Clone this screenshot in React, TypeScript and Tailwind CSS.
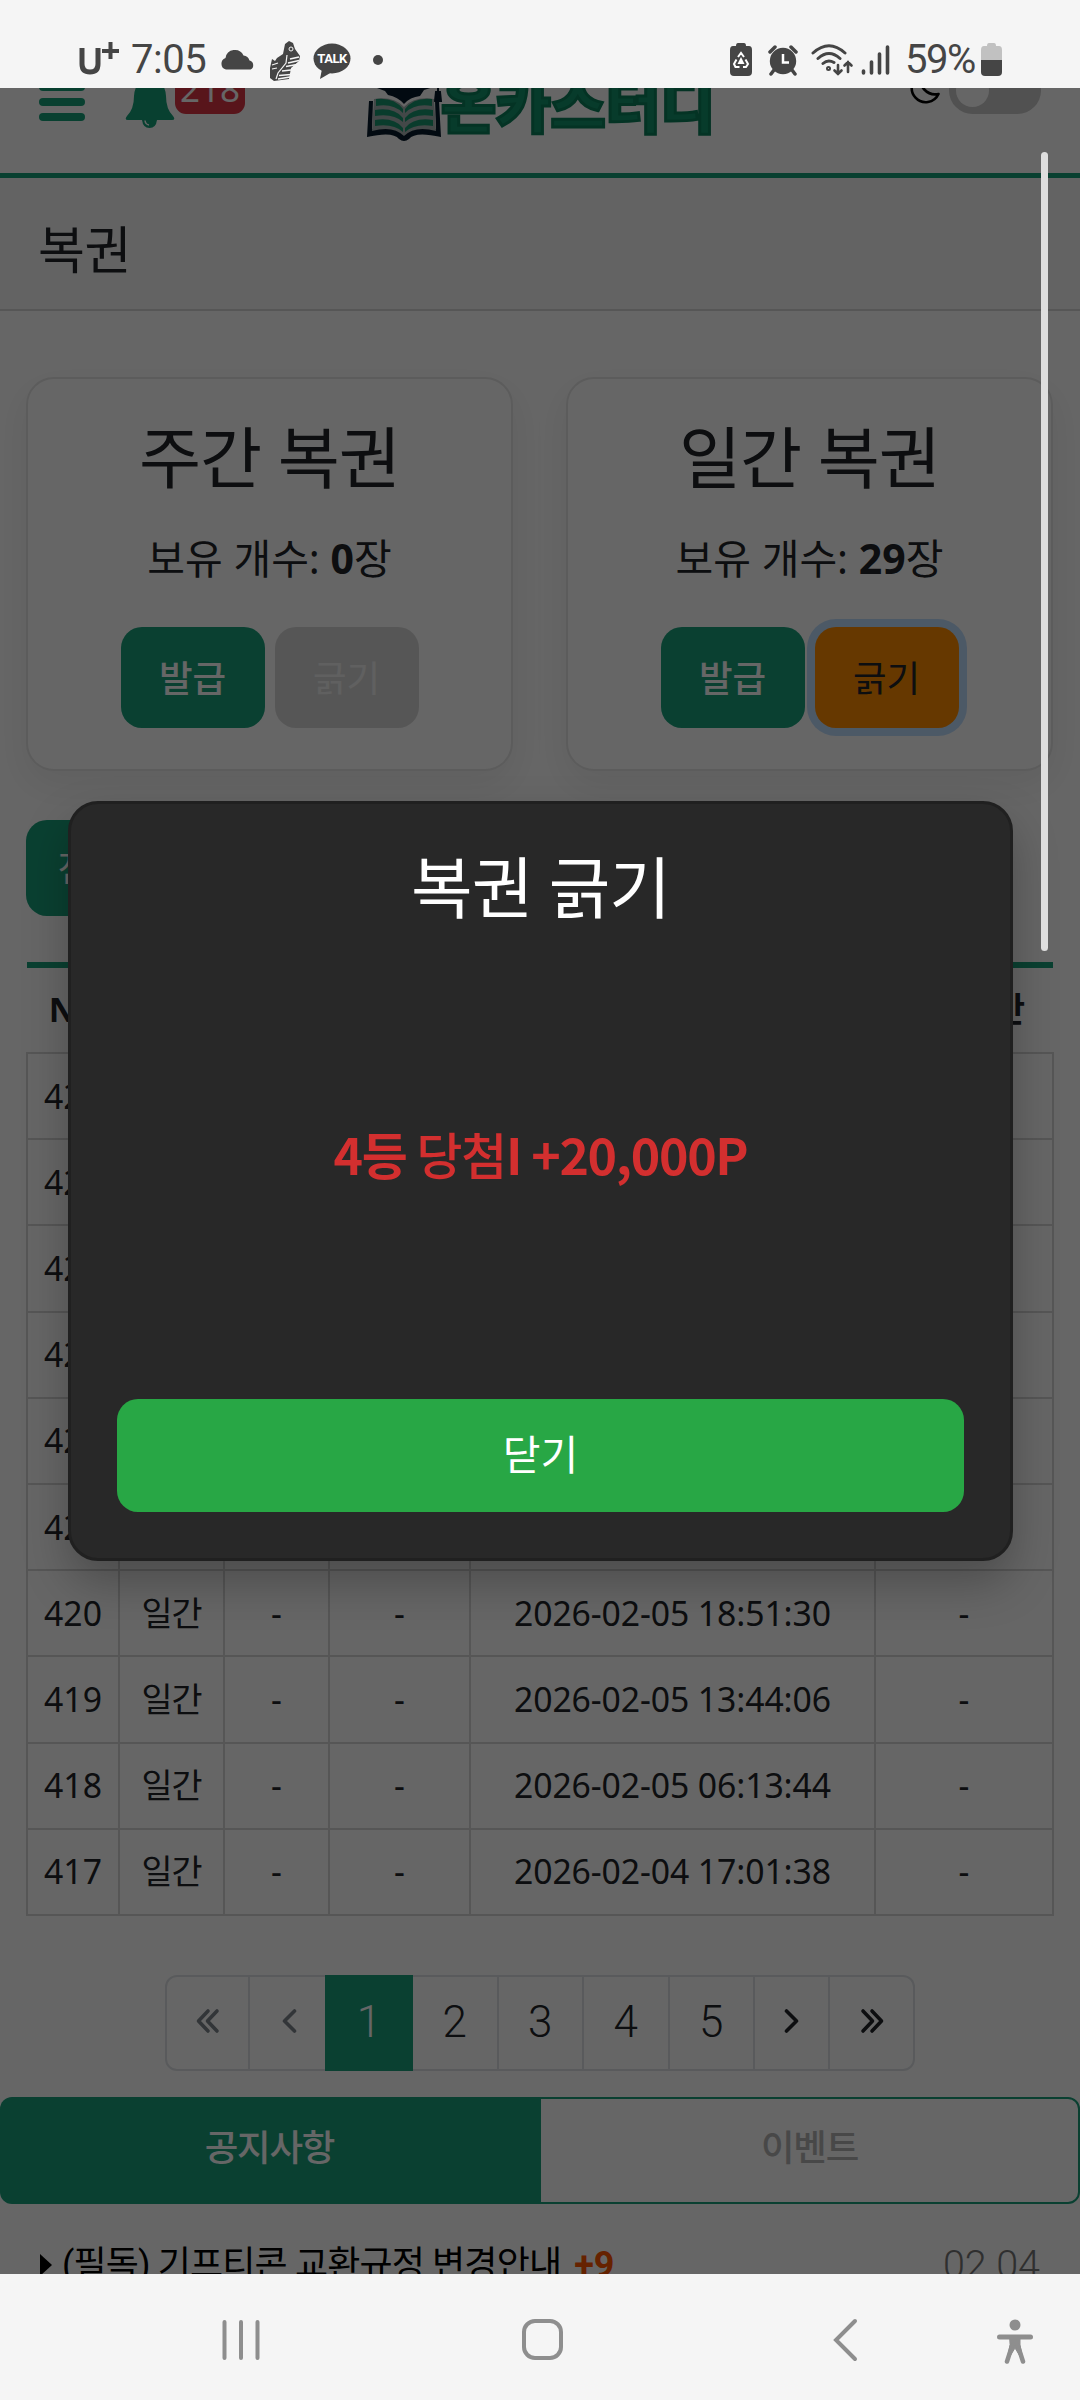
import React from 'react';

const SANS = "font-['Noto_Sans','Noto_Sans_CJK_KR',sans-serif]";
const ROBOTO = "font-['Roboto','Noto_Sans_CJK_KR',sans-serif]";

const rows = [
  { no: 426, date: '2026-02-07 18:32:11' },
  { no: 425, date: '2026-02-07 13:05:48' },
  { no: 424, date: '2026-02-07 06:21:09' },
  { no: 423, date: '2026-02-06 19:14:52' },
  { no: 422, date: '2026-02-06 13:11:37' },
  { no: 421, date: '2026-02-06 06:40:25' },
  { no: 420, date: '2026-02-05 18:51:30' },
  { no: 419, date: '2026-02-05 13:44:06' },
  { no: 418, date: '2026-02-05 06:13:44' },
  { no: 417, date: '2026-02-04 17:01:38' },
];

const ShoeIcon = () => (
  <svg width="32" height="40" viewBox="0 0 32 40">
    <path d="M16 3 L20 0 L24 2 L26 8 L31 15 L30 20 L22 27 L20 38 L5 40 L1 37 L1 27 L3 18 L6 20 L8 17 L14 13Z" fill="#454545" />
    <path d="M18 14 L17 22 L9 32 L7 38 M3 24 l6 -2 M3 28 l5 -1" stroke="#f5f5f5" strokeWidth="1.2" fill="none" />
    <path d="M21 18 l9 -2 M19 22 l11 -2.500 M17 25.500 l11 -2 M13 30 l9 -1 M10 34.500 l12 -1 M9 38 l12 -2" stroke="#f5f5f5" strokeWidth="1.700" />
    <circle cx="22" cy="8" r="2" fill="none" stroke="#f5f5f5" strokeWidth="1" />
  </svg>
);

const StatusBar = () => (
  <div className={`flex h-[88px] shrink-0 items-start bg-[#f5f5f5] pl-[79px] pr-[78px] text-[#454545] ${ROBOTO}`}>
    <svg width="41" height="34" viewBox="0 0 41 34" className="mt-[42px]" fill="none" stroke="#454545">
      <path d="M3 6 V22 Q3 30 11 30 Q19 30 19 22 V6" strokeWidth="5" />
      <path d="M23 9 H40 M31.5 0 V17" strokeWidth="4" />
    </svg>
    <span className="ml-[11px] mt-[37px] w-[76px] text-[40px] leading-[46px] tracking-[-0.5px]">7:05</span>
    <svg width="36" height="21" viewBox="0 0 36 21" className="ml-[13px] mt-[49px]" fill="#454545">
      <path d="M6 20.500 A6 6 0 0 1 5.500 9 A9.500 9.500 0 0 1 23.500 6.500 A7 7 0 0 1 29.500 11.500 A4.800 4.800 0 0 1 30.500 20.500Z" />
    </svg>
    <div className="ml-[13px] mt-[41px]"><ShoeIcon /></div>
    <div className="relative ml-[12px] mt-[43px] h-[36px] w-[38px]">
      <svg width="38" height="36" viewBox="0 0 38 36" fill="#454545">
        <ellipse cx="19" cy="15.500" rx="18.500" ry="15" />
        <path d="M9 26 L7 36 L19 29Z" />
      </svg>
      <span className="absolute left-0 top-[8px] w-full text-center text-[13px] font-bold leading-[16px] tracking-[-0.5px] text-white">TALK</span>
    </div>
    <span className="ml-[22px] mt-[55px] size-[10px] rounded-full bg-[#454545]" />

    <div className="ml-auto flex items-start">
      <svg width="22" height="33" viewBox="0 0 22 33" className="mt-[43px]">
        <path d="M6 3 Q6 0 8 0 H14 Q16 0 16 3 H19 Q22 3 22 7 V29 Q22 33 18 33 H4 Q0 33 0 29 V7 Q0 3 3 3Z" fill="#454545" />
        <path d="M8 14 L11 10 L14 14 M15.500 16.500 L18 21 L16 24 H13 M9.500 24 H5.500 L4 21 L6.500 16.500" stroke="#fff" strokeWidth="2" fill="none" />
        <path d="M11 14 L14.500 21 H7.500Z" fill="#fff" />
      </svg>
      <svg width="30" height="31" viewBox="0 0 30 31" className="ml-[16px] mt-[45px]" fill="none" stroke="#454545">
        <circle cx="15" cy="16" r="13.200" fill="#454545" stroke="none" />
        <path d="M2 7 L7 2 M28 7 L23 2 M6 25 L3 29 M24 25 L27 29" strokeWidth="3.500" strokeLinecap="round" />
        <path d="M15 9 V17.500 H21" stroke="#fff" strokeWidth="2.500" />
      </svg>
      <svg width="43" height="32" viewBox="0 0 43 32" className="ml-[13px] mt-[44px]" fill="none" stroke="#454545" strokeWidth="3" strokeLinecap="round">
        <path d="M2 9 Q18 -5.500 34 9 M7 14.500 Q18 4.500 29 14.500 M12 19.500 Q17 15 23 18.500" />
        <circle cx="17.500" cy="24.500" r="1" />
        <path d="M27 21 V30 M23.500 26.500 L27 30 L30.500 26.500 M37 28 V18 M33.500 21.500 L37 18 L40.500 21.500" strokeWidth="2.600" />
      </svg>
      <svg width="30" height="31" viewBox="0 0 30 31" className="ml-[7px] mt-[45px]" stroke="#454545" strokeWidth="3.600" strokeLinecap="round">
        <path d="M2.500 26 V28 M10.500 17 V28 M18.500 9 V28 M26.500 2 V28" />
      </svg>
      <span className="ml-[14px] mt-[37px] w-[70px] text-[40px] leading-[46px] tracking-[-1.500px]">59%</span>
      <svg width="21" height="33" viewBox="0 0 21 33" className="ml-[6px] mt-[43px]">
        <path d="M6 3 Q6 0 8 0 H13 Q15 0 15 3 H18 Q21 3 21 7 V17 H0 V7 Q0 3 3 3Z" fill="#c1c1c1" />
        <path d="M0 17 H21 V29 Q21 33 17 33 H4 Q0 33 0 29Z" fill="#454545" />
      </svg>
    </div>
  </div>
);

const BookLogo = () => (
  <svg width="76" height="80" viewBox="0 0 76 80" className="mt-[40px] shrink-0">
    <path d="M3 22 L38 5 L74 22 L58 27 L54 33 Q44 34 38 41 Q32 34 22 32 L19 28Z" fill="#06192b" />
    <path d="M72 20 V30 M70 29 h4 l1 9 h-6Z" stroke="#06192b" strokeWidth="2" fill="#06192b" />
    <path d="M3 38 L1 74 Q27 68 33 76 Q38 80 43 76 Q49 68 75 74 L73 38 L69 37 L70 66 H6 L7 38Z" fill="#06192b" />
    <path d="M8 36 Q28 33 38 44 Q48 33 68 36 L70 68 Q49 62 38 73 Q27 62 6 68Z" fill="#a9b3b3" />
    <path d="M10 36 Q28 34 37 46 V50 Q27 40 10 43Z M9 47 Q28 44 37 55 V59 Q27 50 9 53Z M9 57 Q28 54 37 65 V69 Q27 60 9 63Z" fill="#17966f" />
    <path d="M66 36 Q48 34 39 46 V50 Q49 40 66 43Z M67 47 Q48 44 39 55 V59 Q49 50 67 53Z M67 57 Q48 54 39 65 V69 Q49 60 67 63Z" fill="#17966f" />
  </svg>
);

const Header = () => (
  <header className="flex h-[155px] items-start border-b-[5px] border-[#14a078] bg-white">
    <div className="ml-[39px] mt-[60px] flex w-[46px] flex-col gap-[7.500px]">
      <span className="h-[7.500px] rounded-sm bg-[#14a078]" />
      <span className="h-[7.500px] rounded-sm bg-[#14a078]" />
      <span className="h-[7.500px] rounded-sm bg-[#14a078]" />
    </div>
    <svg width="50" height="54" viewBox="0 0 50 54" className="ml-[40px] mt-[51px]">
      <path d="M25 1 Q27 1 27.500 5 Q40 7 41 22 Q41 35 48 42 Q51 46 47 46 H3 Q-1 46 2 42 Q9 35 9 22 Q10 7 22.500 5 Q23 1 25 1Z" fill="#14a078" />
      <path d="M17 46 H32 Q31 54 24.500 54 Q18 54 17 46Z" fill="#14a078" />
      <path d="M20 46.500 Q20.500 50.500 24 51" stroke="#fff" strokeWidth="1.500" fill="none" />
    </svg>
    <span className={`mt-[45px] h-[46px] w-[70px] rounded-[11px] bg-[#dc3545] text-center text-[35px] leading-[42px] text-white ${SANS}`}>218</span>
    <div className="ml-[121px] flex">
      <BookLogo />
      <span className="-ml-px mt-[45px] font-['Noto_Sans_CJK_KR',sans-serif] text-[60px] font-black leading-[68px] tracking-[-0.4px] text-[#12956c] [-webkit-text-stroke:3px_#0c7f5b]">온카스터디</span>
    </div>
    <svg width="30" height="34" viewBox="0 0 30 34" className="ml-auto mt-[49px]" fill="none" stroke="#000" strokeWidth="2.600" strokeLinejoin="round">
      <path d="M11 3 A14 14 0 1 0 28.500 22 A15 15 0 0 1 11 3Z" />
    </svg>
    <div className="ml-[9px] mr-[39px] mt-[44px] h-[47px] w-[92px] rounded-full bg-[#cacaca] p-[7px]">
      <div className="size-[33px] rounded-full bg-white" />
    </div>
  </header>
);

const TicketCard = ({ title, count, active }: { title: string; count: number; active: boolean }) => (
  <div className="flex h-[394px] w-[487px] flex-col items-center rounded-[28px] border-2 border-[#e6e6e6] bg-white shadow-[0_14px_36px_rgba(0,0,0,0.07)]">
    <h3 className="mt-[28px] text-[67.500px] leading-[100px] tracking-[-1px]">{title}</h3>
    <p className="mt-[21px] text-[41px] leading-[60px]">
      보유 개수: <b>{count}</b>장
    </p>
    <div className="mt-[39px] flex gap-[10px]">
      <button className="h-[101px] w-[144px] rounded-[21px] bg-[#19a07c] pt-0.5 text-[36.500px] font-medium text-white">발급</button>
      {active ? (
        <button className="h-[101px] w-[144px] rounded-[21px] bg-[#ff8c00] pt-0.5 text-[36.500px] ring-8 ring-[#bfdeff]">긁기</button>
      ) : (
        <button className="h-[101px] w-[144px] rounded-[21px] bg-[#d8d8d8] pt-0.5 text-[36.500px] text-[#f1f1f1]">긁기</button>
      )}
    </div>
  </div>
);

const HistoryTable = () => (
  <table className="mt-[46px] w-[1028px] table-fixed border-collapse text-center text-[33.750px] leading-[46px]">
    <colgroup>
      <col className="w-[92px]" />
      <col className="w-[105px]" />
      <col className="w-[105px]" />
      <col className="w-[141px]" />
      <col className="w-[405px]" />
      <col className="w-[178px]" />
    </colgroup>
    <thead>
      <tr className="h-[88px] border-t-[6px] border-[#19a07c] font-semibold [&>th]:p-0 [&>th]:pb-[3px]">
        <th>No</th>
        <th>종류</th>
        <th>등수</th>
        <th>당첨금</th>
        <th>발급시간</th>
        <th className="whitespace-nowrap tracking-[-1px]">긁은시간</th>
      </tr>
    </thead>
    <tbody>
      {rows.map((row) => (
        <tr key={row.no} className="h-[86.200px] [&>td]:border-2 [&>td]:border-[#d6d6d6] [&>td]:p-0 [&>td]:pb-px">
          <td>{row.no}</td>
          <td className="tracking-[-1px]">일간</td>
          <td>-</td>
          <td>-</td>
          <td className="whitespace-nowrap tracking-[-0.1px]">{row.date}</td>
          <td>-</td>
        </tr>
      ))}
    </tbody>
  </table>
);

const Arrow = ({ double = false, flip = false }: { double?: boolean; flip?: boolean }) => (
  <svg
    width={double ? 24 : 15}
    height="26"
    viewBox={double ? '0 0 24 26' : '0 0 15 26'}
    className={flip ? 'rotate-180' : ''}
    fill="none"
    stroke="currentColor"
    strokeWidth="3.600"
    strokeLinecap="round"
    strokeLinejoin="round"
  >
    <path d={double ? 'M12 3 L2.500 13 L12 23 M21 3 L11.500 13 L21 23' : 'M12.500 3 L2.500 13 L12.500 23'} />
  </svg>
);

const Pagination = () => (
  <div className={`mx-auto mt-[59px] flex h-[96px] w-[750px] text-[44px] font-light text-[#212529] ${ROBOTO}`}>
    <span className="flex w-[85px] items-center justify-center rounded-l-[12px] border-2 border-[#dee2e6] pb-1 text-[#7d858c]"><Arrow double /></span>
    <span className="flex w-[75px] items-center justify-center border-y-2 border-[#dee2e6] pb-1 pl-1 text-[#7d858c]"><Arrow /></span>
    <span className="flex w-[88px] items-center justify-center bg-[#19a07c] pb-0.5 text-white">1</span>
    {[2, 3, 4, 5].map((n) => (
      <span key={n} className="flex w-[85.500px] items-center justify-center border-y-2 border-r-2 border-[#dee2e6] pb-0.5">{n}</span>
    ))}
    <span className="flex w-[75px] items-center justify-center border-y-2 border-r-2 border-[#dee2e6] pb-1"><Arrow flip /></span>
    <span className="flex w-[85px] items-center justify-center rounded-r-[12px] border-y-2 border-r-2 border-[#dee2e6] pb-1"><Arrow double flip /></span>
  </div>
);

const NoticeTabs = () => (
  <div className={ROBOTO}>
    <div className="mt-[26px] flex h-[107px] text-[36.500px] font-medium tracking-[-1.200px]">
      <div className="flex w-[539px] items-center justify-center rounded-l-[12px] bg-[#19a07c] pb-0.5 text-white">공지사항</div>
      <div className="flex w-[541px] items-center justify-center rounded-r-[12px] border-2 border-[#19a07c] pb-0.5 text-[#b4b4b4]">이벤트</div>
    </div>
    <div className="mt-[34px] flex h-[54px] items-center pl-[40px] pr-[40px] text-[36px] font-light leading-[54px] text-black">
      <svg width="12" height="22" viewBox="0 0 12 22" className="mr-[10px]"><path d="M0 0 L12 11 L0 22Z" /></svg>
      <span className="font-normal tracking-[-0.850px]">(필독) 기프티콘 교환규정 변경안내</span>
      <span className="ml-[13px] font-bold text-[#ff5500]">+9</span>
      <span className="ml-auto text-[39.500px] text-[#777]">02.04</span>
    </div>
  </div>
);

const ResultModal = () => (
  <div className="absolute left-[68px] top-[713px] flex h-[760px] w-[945px] flex-col items-center rounded-[30px] border-[3px] border-[#202020] bg-[#282828] px-[46px] text-white shadow-[0_22px_45px_rgba(0,0,0,0.25)]">
    <h2 className="mt-[33px] text-[67px] leading-[100px] tracking-[-1px]">복권 긁기</h2>
    <div className="flex h-[462px] items-center justify-center pb-[30px] font-['Noto_Sans_CJK_KR',sans-serif] text-[50px] font-bold tracking-[-1.300px] text-[#d32f2f]">
      <span>4등 <span className="font-medium">당첨</span>I +20,000P</span>
    </div>
    <button className="h-[113px] w-full rounded-[21px] bg-[#28a745] pb-0.5 text-[41px]">닫기</button>
  </div>
);

const NavBar = () => (
  <div className="flex h-[126px] shrink-0 items-start bg-[#f5f5f5] pt-[44px]">
    <svg width="38" height="44" viewBox="0 0 38 44" className="ml-[222px]" stroke="#8e8e8e" strokeWidth="4" strokeLinecap="round">
      <path d="M2.500 4 V40 M19 4 V40 M35.500 4 V40" />
    </svg>
    <span className="ml-[262px] mt-px size-[41px] rounded-[13px] border-4 border-[#8e8e8e]" />
    <svg width="26" height="44" viewBox="0 0 26 44" className="ml-[269px]" fill="none" stroke="#8e8e8e" strokeWidth="4" strokeLinecap="round">
      <path d="M23 3 L4 22 L23 41" />
    </svg>
    <svg width="38" height="48" viewBox="0 0 38 48" className="ml-[138px]" fill="#8e8e8e" stroke="#8e8e8e" strokeLinecap="round" strokeLinejoin="round">
      <circle cx="19" cy="7" r="5.500" stroke="none" />
      <path d="M3.500 19 H34.500" strokeWidth="5" />
      <path d="M14 20 H24 V27 L27.500 44 L19 30 L10.500 44 L14 27Z" strokeWidth="1" />
      <path d="M16 28 L11 43.500 M22 28 L27 43.500" strokeWidth="4.500" />
    </svg>
  </div>
);

const App: React.FC = () => {
  return (
    <div className={`flex h-[2400px] w-[1080px] flex-col overflow-hidden bg-white ${SANS}`}>
      <StatusBar />
      <div className="relative h-[2186px] shrink-0 overflow-hidden">
        {/* page, scrolled slightly under the status bar */}
        <main className="-mt-[65px] text-[#212529]">
          <Header />
          <div className="flex h-[133px] items-center border-b-2 border-[#d8d8d8] bg-[#f8f8f8] pl-[38px] pt-[11px] text-[51px] tracking-[-0.500px]">복권</div>
          <div className="px-[26px] pt-[66px]">
            <div className="flex gap-[53px]">
              <TicketCard title="주간 복권" count={0} active={false} />
              <TicketCard title="일간 복권" count={29} active />
            </div>
            <button className="mt-[49px] block h-[96px] w-[130px] rounded-[21px] bg-[#19a07c] text-[36.500px] text-white">전체</button>
            <HistoryTable />
          </div>
          <Pagination />
          <NoticeTabs />
        </main>
        <div className="absolute inset-0 bg-black/60" />
        <ResultModal />
        <div className="absolute left-[1041px] top-[64px] h-[799px] w-[7px] rounded-full bg-[#dedede]" />
      </div>
      <NavBar />
    </div>
  );
};

export default App;
